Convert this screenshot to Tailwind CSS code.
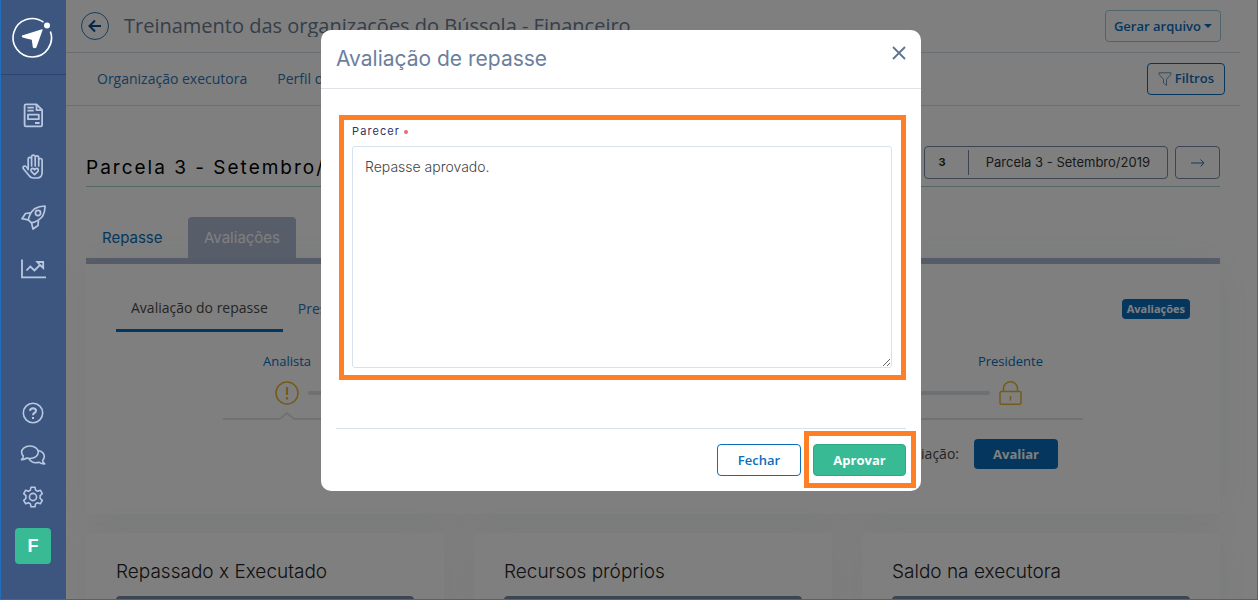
<!DOCTYPE html>
<html lang="pt-BR">
  <head>
    <meta charset="UTF-8" />
    <meta name="viewport" content="width=device-width, initial-scale=1.0" />
    <title>Bússola - Financeiro</title>
    <script src="https://cdn.jsdelivr.net/npm/@tailwindcss/browser@4"></script>
  </head>
  <body class="font-['Open_Sans',sans-serif] text-sm text-[#4a4a4a]">
    <div
      class="relative flex h-screen overflow-hidden border-x border-b border-[#1f70b8] bg-white"
    >
      <!-- Sidebar -->
      <aside
        class="relative z-20 flex w-[65px] shrink-0 flex-col bg-[#3c5680] text-[#b9c8e0]"
      >
        <a
          href="#"
          aria-label="Início"
          class="flex h-[75px] items-center justify-center border-b border-[#2b4470] pr-1 pb-px"
        >
          <svg class="size-11 text-white" viewBox="0 0 44 44" fill="none">
            <path
              d="M33.5 7.2A19.2 19.2 0 1 0 40.4 16.4"
              stroke="currentColor"
              stroke-width="1.6"
            />
            <circle cx="37" cy="10.5" r="3" fill="currentColor" />
            <path
              d="M12 20.5 32 14.2Q33 14 32.6 15L26.4 32.4Q24.5 34 22.8 32.2L21.8 24.8Q17 24 12.6 22.6Q11 21.2 12 20.5Z"
              fill="currentColor"
            />
          </svg>
        </a>
        <nav class="flex grow flex-col items-center pt-7 pr-px pb-[35px]">
          <a href="#" aria-label="Relatórios" class="mb-[26px]">
            <svg
              class="size-[25px]"
              viewBox="0 0 25 25"
              fill="none"
              stroke="currentColor"
              stroke-width="1.8"
              stroke-linejoin="round"
            >
              <path
                d="M5 1.4h10.5l5.6 5.6v15a1.4 1.4 0 0 1-1.4 1.4H5A1.4 1.4 0 0 1 3.6 22V2.8A1.4 1.4 0 0 1 5 1.4Z"
              />
              <path
                d="M15.5 1.8v5.4h5.4M6.4 4.6h6.4M6.4 7.6h6.4M7 11.6h10.8v4.6H7ZM14 20h4.6"
              />
            </svg>
          </a>
          <a href="#" aria-label="Doações" class="mb-[26px]">
            <svg
              class="size-[25px]"
              viewBox="0 0 25 25"
              fill="none"
              stroke="currentColor"
              stroke-width="1.7"
              stroke-linejoin="round"
              stroke-linecap="round"
            >
              <path
                d="M7.2 15.5V5a1.7 1.7 0 0 1 3.4 0V12V3a1.8 1.8 0 0 1 3.6 0V12V3.6a1.7 1.7 0 0 1 3.5 0V12V6.2a1.7 1.7 0 0 1 3.4 0V18.5Q21 24 16 24H12Q9.5 24 8 21.5L2.2 14.5Q1.5 12 4.2 12Q5.5 12.3 7.2 15.5"
              />
              <path
                d="M13.6 20.6 10.2 17.3Q9.4 15 11.5 14.4Q13 14.4 13.6 15.8Q14.3 14.4 15.8 14.4Q17.9 15 17 17.3Z"
              />
            </svg>
          </a>
          <a href="#" aria-label="Projetos" class="mb-[26px]">
            <svg
              class="size-[25px]"
              viewBox="0 0 25 25"
              fill="none"
              stroke="currentColor"
              stroke-width="1.7"
              stroke-linejoin="round"
            >
              <path
                d="M7.3 14.8Q8.5 8 13.5 3.8Q18 1 24 1Q24.2 7 21.4 11.5Q17 16.5 10.5 17.9Z"
              />
              <circle cx="17" cy="8" r="2.6" />
              <path
                d="M9.8 7.8 4.5 8.5 1 13.7 7.3 14.8M17.5 15.4 17 20.5 12 24 10.5 17.9"
              />
            </svg>
          </a>
          <a href="#" aria-label="Indicadores">
            <svg
              class="size-[25px]"
              viewBox="0 0 25 25"
              fill="none"
              stroke="currentColor"
              stroke-width="1.8"
            >
              <path d="M1 3.5V21.3H25" />
              <path
                d="M5.5 14.5 9.3 10.5 13.5 14.5 19 9 16.3 6H22.2V12L19 9"
              />
            </svg>
          </a>
          <a href="#" aria-label="Ajuda" class="mt-auto mb-5">
            <svg
              class="size-[22px]"
              viewBox="0 0 22 22"
              fill="none"
              stroke="currentColor"
              stroke-width="1.6"
            >
              <circle cx="11" cy="11" r="9.7" />
              <path
                d="M8 8.8Q8.2 6.2 11 6.2Q14 6.3 14 8.7Q14 10.2 12.4 11Q11 11.7 11 13.3M11 14.9V16.9"
                stroke-width="2"
              />
            </svg>
          </a>
          <a href="#" aria-label="Mensagens" class="mb-5">
            <svg
              class="h-[22px] w-[26px]"
              viewBox="0 0 26 22"
              fill="none"
              stroke="currentColor"
              stroke-width="1.6"
              stroke-linejoin="round"
            >
              <path
                d="M10 2C14.8 2 18.3 4.8 18.3 8.3S14.8 14.5 10 14.5Q8.3 14.5 6.8 14Q4.5 15.8 1.5 15.6Q3.2 14 3.4 12Q1.6 10.5 1.6 8.3C1.6 4.8 5.2 2 10 2Z"
              />
              <path
                d="M18.3 6.5Q24.3 8 24.3 12.6Q24.2 14.8 22.6 16.3Q22.8 18.3 24.7 19.9Q21.5 20 19.2 18.3Q17.5 18.8 15.6 18.8Q11.2 18.6 9 14.6"
              />
            </svg>
          </a>
          <a href="#" aria-label="Configurações" class="mb-5">
            <svg
              class="size-[22px]"
              viewBox="0 0 22 22"
              fill="none"
              stroke="currentColor"
              stroke-width="1.6"
              stroke-linejoin="round"
            >
              <circle cx="11" cy="11" r="3.6" />
              <path
                d="M9 1.2h4l.6 2.9 1.9 1.1 2.8-1 2 3.5-2.2 1.9v2.8l2.2 1.9-2 3.5-2.8-1-1.900 1.100-.6 2.900H9l-.6-2.900-1.900-1.100-2.800 1-2-3.500 2.200-1.900V9.600L1.700 7.700l2-3.500 2.800 1 1.900-1.100Z"
              />
            </svg>
          </a>
          <a
            href="#"
            class="flex size-9 items-center justify-center rounded bg-[#38bb94] font-['Liberation_Sans',sans-serif] text-lg font-bold text-white"
            >F</a
          >
        </nav>
      </aside>

      <!-- Page -->
      <main class="mr-4 min-w-0 grow">
        <header
          class="mr-px flex h-[53px] items-center border-b border-[#cfdfe6] pr-[19px] pl-[15px]"
        >
          <a
            href="#"
            aria-label="Voltar"
            class="flex size-7 items-center justify-center rounded-full border border-[#2a7cc4] text-[#0b4a8f]"
          >
            <svg
              class="size-4"
              viewBox="0 0 16 16"
              fill="none"
              stroke="currentColor"
              stroke-width="2"
            >
              <path d="M8 2.5 2.5 8 8 13.5M2.5 8H14" />
            </svg>
          </a>
          <h1
            class="ml-[15px] grow overflow-hidden text-xl leading-[22px] whitespace-nowrap text-[#6b7c93]"
          >
            Treinamento das organizações do Bússola - Financeiro
          </h1>
          <button
            class="flex h-8 items-center gap-[3px] rounded border border-[#a3c9dd] px-2 text-[13px] font-semibold text-[#0b6ebd]"
          >
            Gerar arquivo
            <svg class="h-1 w-2" viewBox="0 0 8 4" fill="currentColor">
              <path d="M0 0h8L4 4Z" />
            </svg>
          </button>
        </header>

        <div
          class="mr-px flex h-[53px] items-center justify-between border-b border-[#d6dfe3] pr-[15px] pl-[31px]"
        >
          <nav class="flex gap-[30px] text-[#2c76b8]">
            <a href="#">Organização executora</a>
            <a href="#">Perfil do projeto</a>
          </nav>
          <button
            class="mb-px flex h-8 items-center gap-[3px] rounded border border-[#0b6ebd] px-[10px] text-[13px] font-semibold text-[#0b6ebd]"
          >
            <svg
              class="size-[14px]"
              viewBox="0 0 14 14"
              fill="none"
              stroke="#6b93bd"
            >
              <path d="M1 .8h12v1.4L8.5 7.4v6L5.5 11V7.4L1 2.2Z" />
            </svg>
            Filtros
          </button>
        </div>

        <div class="pr-[21px] pl-5">
          <div
            class="flex h-[81px] items-end justify-between border-b border-[#a9cfca] pb-[7px] font-[Inter,sans-serif]"
          >
            <h2
              class="text-[19px] leading-[22px] tracking-[2px] whitespace-nowrap text-black"
            >
              Parcela 3 - Setembro/2019
            </h2>
            <div class="flex gap-[7px] text-[#333]">
              <button
                class="flex h-[33px] items-center rounded border border-[#7a88a8] py-[3px] text-[13px]"
              >
                <span class="w-[43px] pr-2 text-[11px] font-bold">3</span>
                <span
                  class="flex h-full items-center border-l border-[#7a88a8] px-[17px]"
                  >Parcela 3 - Setembro/2019</span
                >
              </button>
              <button
                aria-label="Próxima parcela"
                class="flex h-[33px] w-[45px] items-center justify-center rounded border border-[#7a88a8] text-[#3b6fae]"
              >
                <svg
                  class="h-2 w-[14px]"
                  viewBox="0 0 14 8"
                  fill="none"
                  stroke="currentColor"
                >
                  <path d="M0 4h13M9.5 .5 13 4 9.5 7.5" />
                </svg>
              </button>
            </div>
          </div>

          <!-- Tabs -->
          <div
            class="mt-[30px] flex h-[47px] border-b-6 border-[#aebad3] font-[Inter,sans-serif] text-[15px]"
          >
            <a href="#" class="flex w-[102px] items-center pl-4 text-[#0b6ebd]"
              >Repasse</a
            >
            <a
              href="#"
              class="flex items-center rounded-t bg-[#aebad3] px-4 text-white"
              >Avaliações</a
            >
          </div>

          <section
            class="h-[250px] px-[30px] pt-[22px] shadow-[0_0_40px_rgba(80,100,110,0.07)]"
          >
            <div class="flex items-center justify-between">
              <nav class="flex text-[#2c76b8]">
                <a
                  href="#"
                  class="flex h-[46px] items-center border-b-3 border-[#0b6ebd] px-[15px] text-[#4a4a4a]"
                  >Avaliação do repasse</a
                >
                <a href="#" class="flex h-[46px] items-center px-[15px]"
                  >Prestação de contas</a
                >
              </nav>
              <span
                class="rounded bg-[#0b6ebd] px-[5px] text-[11px] leading-5 font-bold text-white"
                >Avaliações</span
              >
            </div>

            <!-- Approval steps -->
            <div class="mx-auto mt-[19px] max-w-[860px]">
              <div
                class="flex justify-between px-10 text-[13px] leading-5 text-[#0b6ebd]"
              >
                <span>Analista</span>
                <span>Presidente</span>
              </div>
              <div
                class="mt-[10px] flex items-center gap-[9px] pr-[61px] pl-[52px]"
              >
                <svg
                  class="size-6"
                  viewBox="0 0 24 24"
                  fill="none"
                  stroke="#eab530"
                >
                  <circle cx="12" cy="12" r="11" stroke-width="1.5" />
                  <path d="M12 6v8M12 16v2.5" stroke-width="2.2" />
                </svg>
                <div class="h-1 grow rounded-full bg-[#dbe2e8]"></div>
                <svg
                  class="h-6 w-[23px]"
                  viewBox="0 0 23 24"
                  fill="none"
                  stroke="#eab530"
                  stroke-width="1.5"
                >
                  <rect x="1" y="10.5" width="21" height="12.7" rx="1.5" />
                  <path
                    d="M4.5 10.5V7.5a7 6.7 0 0 1 14 0V10.5M11.5 15V19.5"
                  />
                </svg>
              </div>
              <div class="flex h-[15px] items-end">
                <div class="h-[2px] w-[57px] bg-[#e2e2e2]"></div>
                <svg
                  class="h-2 w-[14px]"
                  viewBox="0 0 14 8"
                  fill="none"
                  stroke="#e2e2e2"
                  stroke-width="2"
                >
                  <path d="M0 7 7 1 14 7" />
                </svg>
                <div class="h-[2px] grow bg-[#e2e2e2]"></div>
              </div>
              <div
                class="mt-[19px] flex items-center justify-end gap-[15px] pr-[25px]"
              >
                <span>Realizar avaliação:</span>
                <button
                  class="h-[30px] w-[84px] rounded bg-[#0b6ebd] text-[13px] font-bold text-white"
                >
                  Avaliar
                </button>
              </div>
            </div>
          </section>

          <!-- Summary cards -->
          <div
            class="mt-[19px] grid grid-cols-3 gap-[30px] font-[Inter,sans-serif] text-[19px] leading-7 font-light text-[#222]"
          >
            <section
              class="rounded bg-white px-[30px] pt-[25px] shadow-[0_0_40px_rgba(80,100,110,0.07)]"
            >
              <h3>Repassado x Executado</h3>
              <div class="mt-[10px] h-10 rounded bg-[#7a88a8]"></div>
            </section>
            <section
              class="rounded bg-white px-[30px] pt-[25px] shadow-[0_0_40px_rgba(80,100,110,0.07)]"
            >
              <h3>Recursos próprios</h3>
              <div class="mt-[10px] h-10 rounded bg-[#7a88a8]"></div>
            </section>
            <section
              class="rounded bg-white px-[30px] pt-[25px] shadow-[0_0_40px_rgba(80,100,110,0.07)]"
            >
              <h3>Saldo na executora</h3>
              <div class="mt-[10px] h-10 rounded bg-[#7a88a8]"></div>
            </section>
          </div>
        </div>
      </main>

      <!-- Modal -->
      <div
        class="absolute inset-0 z-10 flex items-start justify-center bg-black/50 pt-[30px] pr-4"
      >
        <form
          role="dialog"
          aria-labelledby="modalTitle"
          class="w-[600px] rounded-[10px] bg-white"
        >
          <div
            class="flex h-[59px] items-center justify-between border-b border-[#dfe3e8] px-[15px]"
          >
            <h2
              id="modalTitle"
              class="font-[Inter,sans-serif] text-[21px] text-[#6b7f9e]"
            >
              Avaliação de repasse
            </h2>
            <button type="button" aria-label="Fechar" class="mb-3">
              <svg
                class="size-[14px] text-[#5f7393]"
                viewBox="0 0 14 14"
                fill="none"
                stroke="currentColor"
                stroke-width="1.8"
              >
                <path d="M1 1 13 13M13 1 1 13" />
              </svg>
            </button>
          </div>

          <div
            class="mt-[26px] mr-[15px] ml-[18px] border-5 border-[#ff7f27] pr-[9px] pb-[7px] pl-2"
          >
            <label
              for="parecer"
              class="flex h-[26px] items-center gap-1 pb-[2px] font-[Inter,sans-serif] text-[11px] tracking-widest text-[#32325d]"
            >
              Parecer
              <span class="size-1 rounded-full bg-[#f0696a]"></span>
            </label>
            <textarea
              id="parecer"
              class="block h-[222px] w-full resize rounded-[3px] border border-[#d8e2ee] px-3 py-[10px] font-[Inter,sans-serif] text-sm font-light text-[#444]"
            >
Repasse aprovado.</textarea
            >
          </div>

          <div
            class="mx-[15px] mt-12 flex h-[63px] justify-end gap-3 border-t border-[#d8e2ee] pt-[15px] text-[13px]"
          >
            <button
              type="button"
              class="h-8 w-[84px] rounded border border-[#0b6ebd] font-semibold text-[#0b6ebd]"
            >
              Fechar
            </button>
            <div class="relative h-8">
              <button
                type="submit"
                class="h-8 w-[93px] rounded border border-[#2da882] bg-[#38bb94] font-bold text-white"
              >
                Aprovar
              </button>
              <span
                class="pointer-events-none absolute -top-[13px] -right-[10px] -bottom-3 -left-[9px] border-5 border-[#ff7f27]"
              ></span>
            </div>
          </div>
        </form>
      </div>
    </div>
  </body>
</html>
